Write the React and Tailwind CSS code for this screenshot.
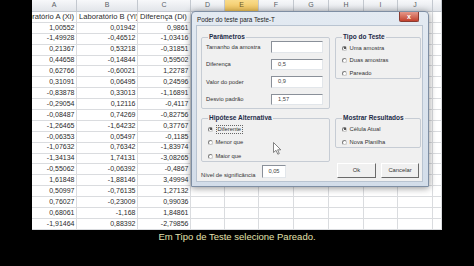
import React from 'react';

const rows = [
  ['1,00552', '0,01942', '0,9861'],
  ['-1,49928', '-0,46512', '-1,03416'],
  ['0,21367', '0,53218', '-0,31851'],
  ['0,44658', '-0,14844', '0,59502'],
  ['0,62766', '-0,60021', '1,22787'],
  ['0,31091', '0,06495', '0,24596'],
  ['-0,83878', '0,33013', '-1,16891'],
  ['-0,29054', '0,12116', '-0,4117'],
  ['-0,08487', '0,74269', '-0,82756'],
  ['-1,26465', '-1,64232', '0,37767'],
  ['-0,06353', '0,05497', '-0,1185'],
  ['-1,07632', '0,76342', '-1,83974'],
  ['-1,34134', '1,74131', '-3,08265'],
  ['-0,55062', '-0,06392', '-0,4867'],
  ['1,61848', '-1,88146', '3,49994'],
  ['0,50997', '-0,76135', '1,27132'],
  ['0,76027', '-0,23009', '0,99036'],
  ['0,68061', '-1,168', '1,84861'],
  ['-1,91464', '0,88392', '-2,79856'],
];

const letters = ['A', 'B', 'C', 'D', 'E', 'F', 'G', 'H', 'I', 'J', ''];
const emptyCols = [3, 4, 5, 6, 7, 8, 9, 10];

const rowGrid =
  'grid grid-cols-[45px_61px_53px_34px_34px_35px_35px_35px_34px_35px_9px]';

function Cell({ children, align = 'right' }) {
  return (
    <div
      className={
        'flex items-center overflow-hidden whitespace-nowrap border-r border-b border-[#dadcdf] ' +
        (align === 'right' ? 'justify-end pr-[1.5px]' : 'justify-start pl-[2px]')
      }
    >
      {children}
    </div>
  );
}

function Sheet() {
  return (
    <div className="w-[410px] h-[230px] bg-white overflow-hidden font-['Liberation_Sans',Arial,sans-serif] text-[#2b2b2b]">
      <div className={rowGrid + ' h-[12px] text-[7px] text-[#5b5f66]'}>
        {letters.map((l, i) => (
          <div
            key={i}
            className={
              'flex items-center justify-center border-r border-b border-[#c3c8cf] ' +
              (l === 'E'
                ? 'bg-gradient-to-b from-[#f9dc8c] to-[#f0c257] text-[#6b5a2a]'
                : 'bg-gradient-to-b from-[#f7f8fa] to-[#e2e5ea]')
            }
          >
            {l}
          </div>
        ))}
      </div>
      <div className={rowGrid + ' h-[10.9px] text-[7.6px]'}>
        <Cell>
          <span className="pr-[0.5px]">Laboratório A (Xi)</span>
        </Cell>
        <Cell align="left">Laboratório B (Yi)</Cell>
        <Cell align="left">Diferença (Di)</Cell>
        {emptyCols.map((c) => (
          <Cell key={c} />
        ))}
      </div>
      {rows.map((r, i) => (
        <div key={i} className={rowGrid + ' h-[10.9px] text-[7px]'}>
          <Cell>{r[0]}</Cell>
          <Cell>{r[1]}</Cell>
          <Cell>{r[2]}</Cell>
          {emptyCols.map((c) => (
            <Cell key={c} />
          ))}
        </div>
      ))}
    </div>
  );
}

function TextBox({ value, className }) {
  return (
    <div
      className={
        'flex items-center bg-white border border-t-[#8a9099] border-l-[#8a9099] border-r-[#e2e6ea] border-b-[#e2e6ea] text-[5.7px] text-[#444] ' +
        className
      }
    >
      {value}
    </div>
  );
}

function Radio({ label, checked, focus }) {
  return (
    <div className="flex items-center gap-[2.5px] h-[8px]">
      <div className="w-[5px] h-[5px] rounded-full border border-[#7d7d7d] border-r-[#c8c8c8] border-b-[#c8c8c8] bg-white flex items-center justify-center">
        {checked && <div className="w-[2px] h-[2px] rounded-full bg-[#222]" />}
      </div>
      <span
        className={
          'text-[5.8px] leading-[7px] text-[#333] ' +
          (focus ? 'border border-dotted border-[#666] px-[1px]' : '')
        }
      >
        {label}
      </span>
    </div>
  );
}

function Group({ title, children, className }) {
  return (
    <fieldset className={'border border-[#c6ccd4] rounded-[2px] ' + className}>
      <legend className="ml-[6px] px-[1px] font-bold text-[6.5px] leading-[8px] text-[#1d2b48]">
        {title}
      </legend>
      {children}
    </fieldset>
  );
}

function Dialog() {
  const params = [
    ['Tamanho da amostra', ''],
    ['Diferença', '0,5'],
    ['Valor do poder', '0,9'],
    ['Desvio padrão', '1,57'],
  ];
  return (
    <div className="absolute left-[191px] top-[11px] w-[238px] h-[176px] flex flex-col pl-[4px] pr-[5px] pb-[4px] bg-gradient-to-b from-[#e3eaf2] to-[#d3dde9] border border-[#7e8ea3] rounded-t-[4px] shadow-[0_1px_7px_rgba(0,0,0,0.45)] font-['Liberation_Sans',Arial,sans-serif]">
      <div className="h-[13px] flex items-start justify-between">
        <span className="mt-[4px] ml-[1px] text-[6.3px] leading-[8px] text-[#1a1a1a]">
          Poder do teste para Teste-T
        </span>
        <div className="w-[20px] h-[10px] mr-[4px] rounded-b-[2px] bg-gradient-to-b from-[#e5988a] to-[#c2402c] border border-[#8a3a30] border-t-0 flex items-center justify-center text-white text-[7px] font-bold leading-none">
          x
        </div>
      </div>
      <div className="flex-1 flex flex-col bg-[#f0f0f0] border border-[#b9c4d1] pl-[4px] pr-[3px] pt-[7px]">
        <div className="grid grid-cols-[129px_86px] gap-x-[5px] gap-y-[5px] items-start">
          <Group title="Parâmetros">
            <div className="flex flex-col gap-[6px] pb-[3px] pl-[4px] pr-[6px]">
              {params.map(([l, v]) => (
                <div key={l} className="flex items-center justify-between h-[11.5px]">
                  <span className="text-[5.8px] leading-[7px] text-[#333] mt-[1px]">{l}</span>
                  <TextBox value={v} className="w-[52px] h-[11.5px] pl-[6px]" />
                </div>
              ))}
            </div>
          </Group>
          <Group title="Tipo do Teste">
            <div className="flex flex-col gap-[4.5px] pt-[3px] pb-[1px] pl-[6px]">
              <Radio label="Uma amostra" checked />
              <Radio label="Duas amostras" />
              <Radio label="Pareado" />
            </div>
          </Group>
          <Group title="Hipótese Alternativa">
            <div className="flex flex-col gap-[5.5px] pt-[3px] pb-[1px] pl-[6px]">
              <Radio label="Diferente" checked focus />
              <Radio label="Menor que" />
              <Radio label="Maior que" />
            </div>
          </Group>
          <Group title="Mostrar Resultados">
            <div className="flex flex-col gap-[5px] pt-[3px] pb-[1px] pl-[6px]">
              <Radio label="Célula Atual" checked />
              <Radio label="Nova Planilha" />
            </div>
          </Group>
        </div>
        <div className="flex items-start mt-[1px]">
          <span className="w-[61px] mt-[8px] text-[5.8px] leading-[8px] text-[#333]">
            Nível de significância
          </span>
          <TextBox value="0,05" className="mt-[2px] w-[24px] h-[13px] justify-center" />
          <div className="ml-auto flex gap-[5px]">
            <button className="w-[39px] h-[15px] bg-[#f0f0f0] border border-t-white border-l-white border-r-[#6a6a6a] border-b-[#6a6a6a] text-[5.8px] text-[#333]">
              Ok
            </button>
            <button className="w-[38px] h-[15px] bg-[#f0f0f0] border border-t-white border-l-white border-r-[#6a6a6a] border-b-[#6a6a6a] text-[5.8px] text-[#333]">
              Cancelar
            </button>
          </div>
        </div>
      </div>
    </div>
  );
}

export default function App() {
  return (
    <div className="relative w-[474px] h-[266px] bg-black overflow-hidden flex flex-col">
      <div className="flex h-[230px]">
        <div className="w-[32px] bg-black" />
        <Sheet />
        <div className="w-[32px] bg-black" />
      </div>
      <div className="flex-1 flex justify-center">
        <span className="font-['Liberation_Sans',Arial,sans-serif] text-[9.5px] leading-[14px] text-[#e2e0ad]">
          Em Tipo de Teste selecione Pareado.
        </span>
      </div>
      <Dialog />
      <svg className="absolute left-[273px] top-[142px]" width="9" height="13" viewBox="0 0 9 13">
        <path
          d="M0.5 0.5 L0.5 10.5 L3 8.3 L4.8 12.2 L6.3 11.6 L4.6 7.8 L7.8 7.8 Z"
          fill="#fff"
          stroke="#666"
          strokeWidth="0.8"
        />
      </svg>
    </div>
  );
}
